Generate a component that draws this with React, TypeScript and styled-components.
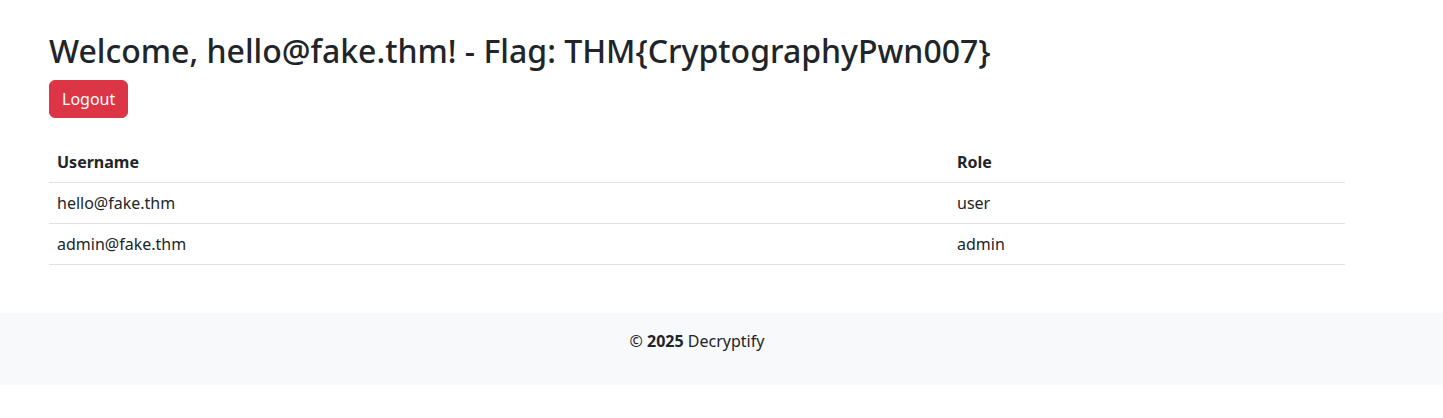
import React from "react";
import styled, { createGlobalStyle } from "styled-components";

const GlobalStyle = createGlobalStyle`
  * { box-sizing: border-box; }
  body {
    margin: 0;
    background: #fff;
    color: #212529;
    font-family: "Noto Sans", "Liberation Sans", sans-serif;
    font-size: 16px;
    line-height: 1.5;
  }
`;

const Page = styled.div`
  display: flex;
  flex-direction: column;
`;

const Container = styled.main`
  width: 1320px;
  margin-left: 37px;
  padding: 32px 12px 0;
`;

const Title = styled.h2`
  margin: 0 0 10px;
  font-size: 32px;
  font-weight: 500;
  line-height: 1.2;
`;

const LogoutButton = styled.button`
  display: inline-block;
  font-family: inherit;
  font-size: 16px;
  line-height: 1.5;
  padding: 6px 12px;
  color: #fff;
  background: #dc3545;
  border: 1px solid #dc3545;
  border-radius: 6px;
  cursor: pointer;
`;

const Table = styled.table`
  width: 100%;
  margin-top: 24px;
  margin-bottom: 48px;
  border-collapse: collapse;
  color: #212529;
`;

const HeadCell = styled.th<{ $w?: string }>`
  text-align: left;
  font-weight: 700;
  padding: 8px;
  border-bottom: 1px solid #dee2e6;
  width: ${(p) => p.$w || "auto"};
`;

const Cell = styled.td`
  padding: 8px;
  border-bottom: 1px solid #dee2e6;
`;

const Footer = styled.footer`
  background: #f8f9fa;
  padding: 16px 0 32px;
`;

const FooterInner = styled.div`
  width: 1320px;
  margin-left: 37px;
  padding: 0 12px;
  text-align: center;
`;

const users = [
  { name: "hello@fake.thm", role: "user" },
  { name: "admin@fake.thm", role: "admin" },
];

export default function App() {
  return (
    <Page>
      <GlobalStyle />
      <Container>
        <Title>Welcome, hello@fake.thm! - Flag: THM{"{"}CryptographyPwn007{"}"}</Title>
        <LogoutButton>Logout</LogoutButton>
        <Table>
          <thead>
            <tr>
              <HeadCell $w="900px">Username</HeadCell>
              <HeadCell>Role</HeadCell>
            </tr>
          </thead>
          <tbody>
            {users.map((u) => (
              <tr key={u.name}>
                <Cell>{u.name}</Cell>
                <Cell>{u.role}</Cell>
              </tr>
            ))}
          </tbody>
        </Table>
      </Container>
      <Footer>
        <FooterInner>
          © <strong>2025</strong> Decryptify
        </FooterInner>
      </Footer>
    </Page>
  );
}
